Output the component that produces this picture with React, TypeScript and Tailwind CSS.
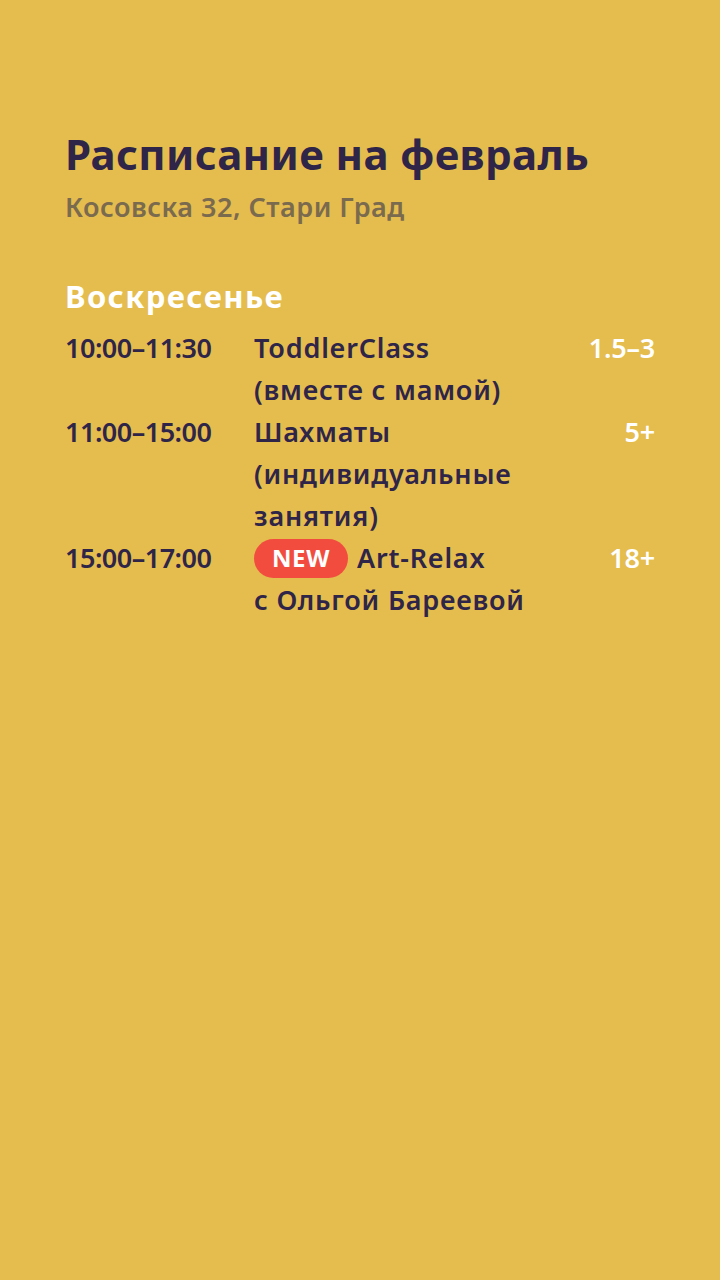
import React from "react";

const rows = [
  { time: "10:00–11:30", lines: ["ToddlerClass", "(вместе с мамой)"], age: "1.5–3", isNew: false },
  { time: "11:00–15:00", lines: ["Шахматы", "(индивидуальные", "занятия)"], age: "5+", isNew: false },
  { time: "15:00–17:00", lines: ["Art-Relax", "с Ольгой Бареевой"], age: "18+", isNew: true },
];

export default function App() {
  return (
    <div
      className="w-[720px] h-[1280px] bg-[#E5BC4E] px-[65px] pt-[124px] text-[#2E2548]"
      style={{ fontFamily: '"Noto Sans", "Open Sans", sans-serif' }}
    >
      <h1 className="text-[42px] leading-[60px] font-bold tracking-[0.4px]">Расписание на февраль</h1>
      <div className="text-[27px] leading-[36px] font-semibold text-[#7A6A4E] mt-[5px] tracking-[0.5px]">Косовска 32, Стари Град</div>
      <div className="mt-[50px] text-[31px] leading-[42px] font-bold text-white tracking-[1.4px]">Воскресенье</div>
      <div className="mt-[10px] flex flex-col text-[27px] leading-[42px] font-semibold">
        {rows.map((r) => (
          <div key={r.time} className="flex">
            <div className="w-[189px] shrink-0 tracking-[-0.5px]">{r.time}</div>
            <div className="flex-1 tracking-[0.8px]">
              {r.lines.map((l, i) => (
                <div key={i} className="flex items-center">
                  {i === 0 && r.isNew && (
                    <span className="mr-[9px] inline-flex h-[39px] items-center rounded-full bg-[#F24C3F] px-[18px] text-[24px] font-bold text-white tracking-[0.6px]">
                      NEW
                    </span>
                  )}
                  {l}
                </div>
              ))}
            </div>
            <div className="text-white text-right tracking-[-0.2px]">{r.age}</div>
          </div>
        ))}
      </div>
    </div>
  );
}
